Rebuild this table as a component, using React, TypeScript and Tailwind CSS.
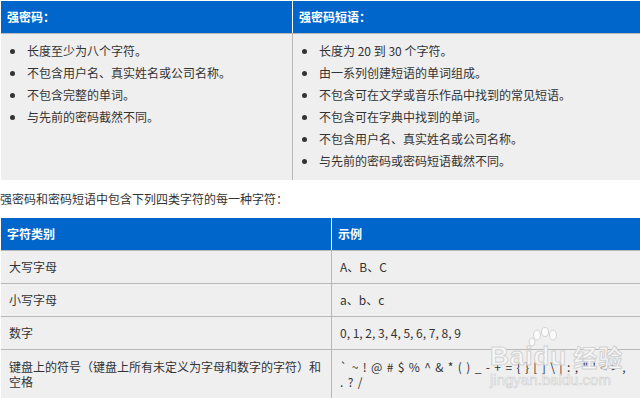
import React from "react";

const pwdRules = [
  "长度至少为八个字符。",
  "不包含用户名、真实姓名或公司名称。",
  "不包含完整的单词。",
  "与先前的密码截然不同。",
];

const phraseRules = [
  "长度为 20 到 30 个字符。",
  "由一系列创建短语的单词组成。",
  "不包含可在文学或音乐作品中找到的常见短语。",
  "不包含可在字典中找到的单词。",
  "不包含用户名、真实姓名或公司名称。",
  "与先前的密码或密码短语截然不同。",
];

const rows = [
  { kind: "大写字母", sample: "A、B、C" },
  { kind: "小写字母", sample: "a、b、c" },
  { kind: "数字", sample: "0, 1, 2, 3, 4, 5, 6, 7, 8, 9" },
];

const BulletList = ({ items }: { items: string[] }) => (
  <ul className="pt-[6px]">
    {items.map((t) => (
      <li key={t} className="flex items-center leading-[22px]">
        <span className="w-[26px] pl-[9px] flex items-center">
          <span className="block w-[5px] h-[5px] rounded-full bg-[#333]" />
        </span>
        <span>{t}</span>
      </li>
    ))}
  </ul>
);

// 百度经验水印
const Watermark = () => (
  <div aria-hidden className="absolute left-[490px] top-[327px] pointer-events-none select-none">
    <svg width="34" height="22" viewBox="0 0 34 22" className="absolute left-[38px] top-0">
      <g fill="#fafafa" stroke="#d4d4d4" strokeWidth="1">
        <ellipse cx="9" cy="8" rx="3.5" ry="5" />
        <ellipse cx="17" cy="5" rx="3.5" ry="4.5" />
        <ellipse cx="25" cy="8" rx="3.5" ry="5" />
        <ellipse cx="4" cy="15" rx="3" ry="4" />
      </g>
    </svg>
    <div className="pt-[16px] flex items-end leading-none font-['Liberation_Sans',sans-serif] font-bold text-[26px] text-[#f7f7f7] [-webkit-text-stroke:1px_#d2d2d2] tracking-[1px]">
      <span>Baidu</span>
      <span className="ml-[6px] text-[24px] font-['Noto_Sans_CJK_SC',sans-serif]">经验</span>
    </div>
    <div className="mt-[3px] leading-none font-['Liberation_Sans',sans-serif] text-[15px] text-[#f7f7f7] [-webkit-text-stroke:0.6px_#cfcfcf]">
      jingyan.baidu.com
    </div>
  </div>
);

export default function App() {
  return (
    <div className="relative w-[640px] h-[398px] overflow-hidden bg-white text-[12px] text-[#333] font-['Noto_Sans_CJK_SC','Microsoft_YaHei',sans-serif]">
      {/* 顶部对比表 */}
      <div className="pt-px pl-px">
        <div className="flex h-[33px] bg-[#0066cc] text-white font-bold border-b border-[#b8b8b8]">
          <div className="w-[292px] border-r border-white px-[6px] leading-[32px]">强密码：</div>
          <div className="flex-1 px-[6px] leading-[32px]">强密码短语：</div>
        </div>
        <div className="flex h-[146px] bg-[#efefef]">
          <div className="w-[292px] border-r border-[#b8b8b8]">
            <BulletList items={pwdRules} />
          </div>
          <div className="flex-1">
            <BulletList items={phraseRules} />
          </div>
        </div>
      </div>

      <p className="h-[38px] leading-[38px]">强密码和密码短语中包含下列四类字符的每一种字符：</p>

      {/* 字符类别表 */}
      <div className="pl-px">
        <div className="flex h-[33px] bg-[#0066cc] text-white font-bold border-b border-[#b8b8b8]">
          <div className="w-[331px] border-r border-white px-[6px] leading-[32px]">字符类别</div>
          <div className="flex-1 px-[6px] leading-[32px]">示例</div>
        </div>
        {rows.map((r) => (
          <div key={r.kind} className="flex h-[33px] bg-[#efefef] border-b border-[#b8b8b8]">
            <div className="w-[331px] border-r border-[#b8b8b8] px-[8px] leading-[32px]">{r.kind}</div>
            <div className="flex-1 px-[8px] leading-[32px]">{r.sample}</div>
          </div>
        ))}
        <div className="flex h-[60px] bg-[#efefef]">
          <div className="w-[331px] border-r border-[#b8b8b8] px-[8px] pt-[9px] leading-[15px]">
            键盘上的符号（键盘上所有未定义为字母和数字的字符）和
            <br />
            空格
          </div>
          <div className="flex-1 px-[8px] pt-[9px] leading-[15px] tracking-[0.85px] whitespace-nowrap">
            {"` ~ ! @ # $ % ^ & * ( ) _ - + = { } [ ] \\ | : ; \" ' < > ,"}
            <br />
            {". ? /"}
          </div>
        </div>
      </div>

      <Watermark />
    </div>
  );
}
